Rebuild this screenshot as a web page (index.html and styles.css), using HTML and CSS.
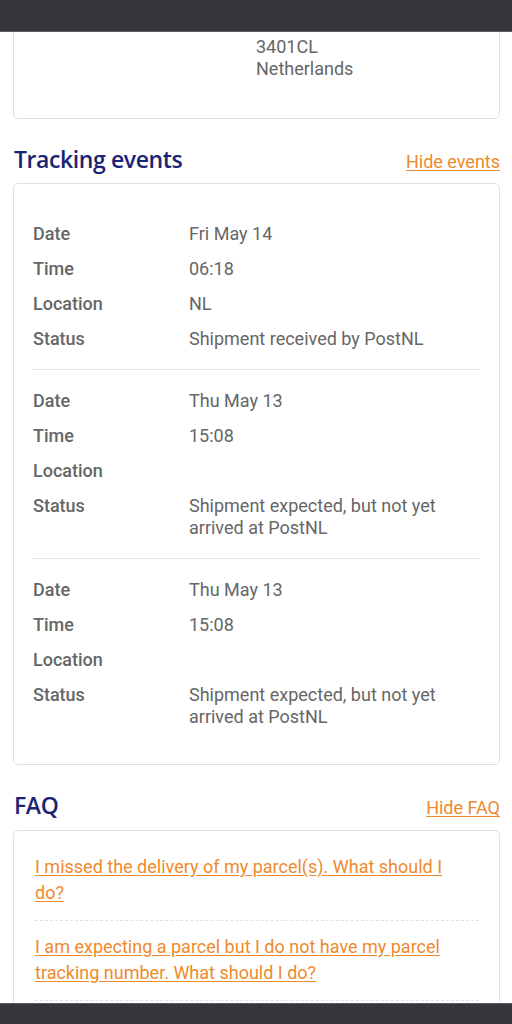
FILE: index.html
```html
<!DOCTYPE html>
<html lang="en">
<head>
    <meta charset="UTF-8">
    <meta name="viewport" content="width=device-width, initial-scale=1.0">
    <title>Track & Trace - PostNL</title>
    <link rel="stylesheet" href="styles.css">
</head>
<body>
    <div class="topbar"></div>

    <main class="page">
        <div class="card address">
            <div class="address-lines">
                <div>3401CL</div>
                <div>Netherlands</div>
            </div>
        </div>

        <div class="section-head">
            <h2>Tracking events</h2>
            <a href="#">Hide events</a>
        </div>

        <div class="card events">
            <dl class="event">
                <dt>Date</dt><dd>Fri May 14</dd>
                <dt>Time</dt><dd>06:18</dd>
                <dt>Location</dt><dd>NL</dd>
                <dt>Status</dt><dd>Shipment received by PostNL</dd>
            </dl>
            <dl class="event">
                <dt>Date</dt><dd>Thu May 13</dd>
                <dt>Time</dt><dd>15:08</dd>
                <dt>Location</dt><dd></dd>
                <dt>Status</dt><dd>Shipment expected, but not yet arrived at PostNL</dd>
            </dl>
            <dl class="event">
                <dt>Date</dt><dd>Thu May 13</dd>
                <dt>Time</dt><dd>15:08</dd>
                <dt>Location</dt><dd></dd>
                <dt>Status</dt><dd>Shipment expected, but not yet arrived at PostNL</dd>
            </dl>
        </div>

        <div class="section-head faq-head">
            <h2>FAQ</h2>
            <a href="#">Hide FAQ</a>
        </div>

        <div class="card faq">
            <div class="faq-item"><a href="#">I missed the delivery of my parcel(s). What should I do?</a></div>
            <div class="faq-item"><a href="#">I am expecting a parcel but I do not have my parcel tracking number. What should I do?</a></div>
        </div>
    </main>

    <div class="bottombar"></div>
</body>
</html>
```

FILE: styles.css
```css
html, body { height: 1024px; overflow: hidden; }
body { margin: 0; background: #fff; font-family: Roboto, "Liberation Sans", sans-serif; font-size: 18px; color: #666; }

.topbar { position: fixed; top: 0; left: 0; right: 0; height: 31px; background: #35363a; border-bottom: 1px solid #5a5b5e; z-index: 2; }
.bottombar { position: fixed; bottom: 0; left: 0; right: 0; height: 20px; background: #35363a; border-top: 1px solid #5a5b5e; z-index: 2; }

.page { padding: 0 12px 0 13px; }

.card { border: 1px solid #e0e0e0; border-radius: 5px; background: #fff; }

.address { padding: 35px 19px 38px 242px; line-height: 22px; }

.section-head { display: flex; justify-content: space-between; align-items: baseline; margin: 25px 0 9px 1px; }
.section-head h2 { margin: 0; font-family: "Open Sans", "Noto Sans", sans-serif; font-weight: 600; font-size: 23px; letter-spacing: -0.4px; color: #1b2473; line-height: 30px; }
.section-head a { color: #ef8a2c; text-decoration: underline; text-underline-offset: 2px; line-height: 22px; }

.events { padding: 19px 19px 17px; }
.event { display: grid; grid-template-columns: 156px 1fr; row-gap: 13px; margin: 0; padding: 20px 0 19px; line-height: 22px; }
.event + .event { border-top: 1px solid #e3e3e3; }
.event dt { font-weight: 500; color: #666; }
.event dd { margin: 0; color: #666; min-height: 22px; }

.faq-head { margin-top: 25px; margin-bottom: 10px; }

.faq { padding: 10px 20px 40px 21px; }
.faq-item { padding: 13px 30px 14px 0; line-height: 26px; border-bottom: 1px dashed #e2e2e2; }
.faq-item a { color: #ef8a2c; text-decoration: underline; text-underline-offset: 2px; }
```
